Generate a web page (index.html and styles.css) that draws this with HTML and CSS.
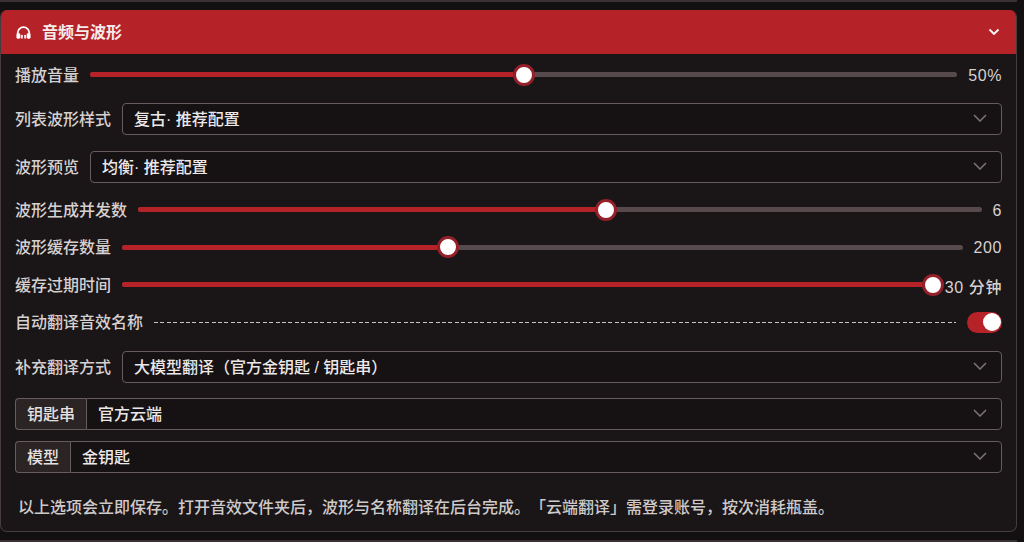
FILE: index.html
```html
<!DOCTYPE html>
<html lang="zh">
<head>
<meta charset="utf-8">
<title>音频与波形</title>
<link rel="stylesheet" href="styles.css">
</head>
<body>
<div class="prev-card"></div>
<section class="panel">
  <header class="head">
    <svg class="head-icon" viewBox="0 0 16 14" aria-hidden="true">
      <path class="hp-band" d="M1.8 9V7.4a6.2 6.2 0 0 1 12.4 0V9"/>
      <rect class="hp-cup" x="0.4" y="7.8" width="4.2" height="5.8" rx="1.5"/>
      <rect class="hp-cup" x="5.4" y="9.4" width="1.8" height="4.2" rx="0.9"/>
      <rect class="hp-cup" x="8.8" y="9.4" width="1.8" height="4.2" rx="0.9"/>
      <rect class="hp-cup" x="11.4" y="7.8" width="4.2" height="5.8" rx="1.5"/>
    </svg>
    <span class="head-title">音频与波形</span>
    <svg class="chev chev-head" viewBox="0 0 12 8" aria-hidden="true"><path d="M1.5 1.5 6 6l4.5-4.5"/></svg>
  </header>
  <div class="body">
    <div class="row slider-row row-first">
      <span class="label">播放音量</span>
      <div class="track"><div class="fill" style="width:50%"></div><div class="thumb" style="left:50%"></div></div>
      <span class="value">50%</span>
    </div>
    <div class="row select-row">
      <span class="label">列表波形样式</span>
      <div class="select"><span>复古· 推荐配置</span><svg class="chev" viewBox="0 0 14 8" aria-hidden="true"><path d="M1 1l6 6 6-6"/></svg></div>
    </div>
    <div class="row select-row">
      <span class="label">波形预览</span>
      <div class="select"><span>均衡· 推荐配置</span><svg class="chev" viewBox="0 0 14 8" aria-hidden="true"><path d="M1 1l6 6 6-6"/></svg></div>
    </div>
    <div class="row slider-row">
      <span class="label">波形生成并发数</span>
      <div class="track"><div class="fill" style="width:55.5%"></div><div class="thumb" style="left:55.5%"></div></div>
      <span class="value">6</span>
    </div>
    <div class="row slider-row">
      <span class="label">波形缓存数量</span>
      <div class="track"><div class="fill" style="width:38.8%"></div><div class="thumb" style="left:38.8%"></div></div>
      <span class="value">200</span>
    </div>
    <div class="row slider-row">
      <span class="label">缓存过期时间</span>
      <div class="track track-tight"><div class="fill" style="width:98.7%"></div><div class="thumb" style="left:98.7%"></div></div>
      <span class="value">30 分钟</span>
    </div>
    <div class="row slider-row row-toggle">
      <span class="label">自动翻译音效名称</span>
      <div class="dashes"></div>
      <div class="toggle"><div class="knob"></div></div>
    </div>
    <div class="row select-row">
      <span class="label">补充翻译方式</span>
      <div class="select"><span>大模型翻译（官方金钥匙 / 钥匙串）</span><svg class="chev" viewBox="0 0 14 8" aria-hidden="true"><path d="M1 1l6 6 6-6"/></svg></div>
    </div>
    <div class="group group-first">
      <span class="addon">钥匙串</span>
      <div class="group-select"><span>官方云端</span><svg class="chev" viewBox="0 0 14 8" aria-hidden="true"><path d="M1 1l6 6 6-6"/></svg></div>
    </div>
    <div class="group group-tight">
      <span class="addon">模型</span>
      <div class="group-select"><span>金钥匙</span><svg class="chev" viewBox="0 0 14 8" aria-hidden="true"><path d="M1 1l6 6 6-6"/></svg></div>
    </div>
    <p class="note">以上选项会立即保存。打开音效文件夹后，波形与名称翻译在后台完成。「云端翻译」需登录账号，按次消耗瓶盖。</p>
  </div>
</section>
<div class="next-card"></div>
</body>
</html>
```
FILE: styles.css
```css
* { box-sizing: border-box; }
html, body { margin: 0; height: 100%; overflow: hidden; }
body {
  width: 1024px;
  height: 542px;
  background: #121011;
  color: #d6d1d1;
  font-family: "Liberation Sans", "Noto Sans CJK SC", sans-serif;
  font-size: 16px;
  text-spacing-trim: space-all;
}
.prev-card {
  height: 10px;
  width: 1017px;
  background: linear-gradient(#3a3133 0, #3a3133 2px, transparent 2px);
}
.panel {
  width: 1017px;
  height: 522px;
  background: #1a1516;
  border: 1px solid #463c3e;
  border-top: 0;
  border-radius: 7px;
  overflow: hidden;
}
.next-card { width: 1017px; height: 2px; margin-top: 8px; background: #3a3133; }
.head {
  height: 44px;
  background: #b52329;
  display: flex;
  align-items: center;
  padding: 0 15px;
  color: #fff;
}
.head-icon { width: 15px; height: 13px; margin-right: 11px; flex: none; }
.hp-band { fill: none; stroke: #fff; stroke-width: 1.9; }
.hp-cup { fill: #fff; }
.head-title { font-weight: 700; flex: 1; color: #f6ecec; padding-bottom: 2px; }
.chev { width: 14px; height: 8px; flex: none; fill: none; stroke: #7d7475; stroke-width: 1.5; }
.chev-head { width: 12px; stroke: #fff; stroke-width: 1.8; margin-right: 1px; }
.body {
  padding: 10px 14px 0 14px;
  display: flex;
  flex-direction: column;
  gap: 16px;
}
.row { display: flex; align-items: center; gap: 11px; }
.slider-row { height: 21.5px; }
.row-first { margin-bottom: 1.5px; }
.row-toggle { margin-bottom: 2px; }
.select-row { height: 32px; }
.label { flex: none; line-height: 20px; padding-top: 2px; font-weight: 500; }
.track {
  flex: 1;
  height: 5px;
  background: #574a4c;
  border-radius: 3px;
  position: relative;
}
.track-tight { margin-right: -10px; }
.fill { height: 100%; background: #b52329; border-radius: 3px; }
.thumb {
  position: absolute;
  top: 50%;
  width: 22px;
  height: 22px;
  margin: -11px 0 0 -11px;
  background: #fff;
  border: 3px solid #94202a;
  border-radius: 50%;
}
.value { flex: none; text-align: right; letter-spacing: 0.6px; padding-top: 2px; font-weight: 500; }
.dashes {
  flex: 1;
  height: 1px;
  background: repeating-linear-gradient(90deg, #c8c2c2 0 4px, transparent 4px 6.4px);
}
.toggle {
  flex: none;
  width: 35px;
  height: 21px;
  background: #b52329;
  border-radius: 11px;
  display: flex;
  justify-content: flex-end;
  align-items: center;
  padding-right: 1.5px;
}
.knob { width: 18px; height: 18px; background: #fff; border-radius: 50%; }
.select, .group-select {
  flex: 1;
  height: 32px;
  display: flex;
  align-items: center;
  justify-content: space-between;
  padding: 0 14px 2px 11px;
  color: #ece8e8;
  background: #161112;
  border: 1px solid #665b5d;
  border-radius: 4px;
  font-weight: 500;
}
.group { display: flex; height: 32px; }
.group-first { margin-top: -1px; }
.group-tight { margin-top: -5px; }
.addon {
  flex: none;
  display: flex;
  align-items: center;
  padding: 0 11px 2px 11px;
  background: #2b2425;
  border: 1px solid #665b5d;
  border-right: 0;
  border-radius: 4px 0 0 4px;
  color: #e4e0e0;
  font-weight: 500;
}
.group-select { border-radius: 0 4px 4px 0; }
.note { margin: 7px 0 0 3px; line-height: 24px; color: #cfcaca; white-space: nowrap; font-weight: 500; }
```
